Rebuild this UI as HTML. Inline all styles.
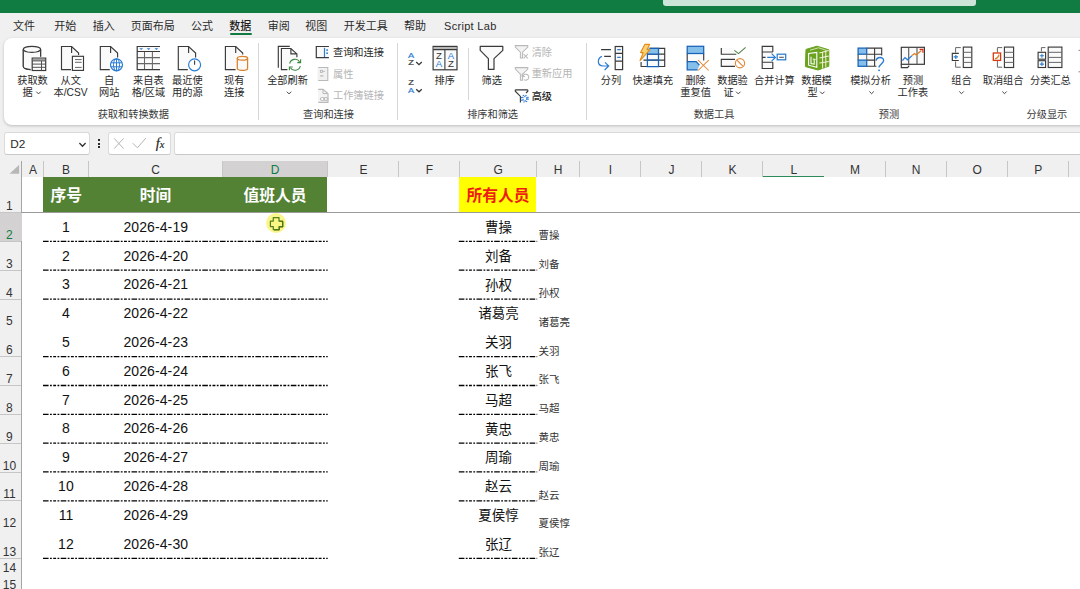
<!DOCTYPE html>
<html lang="zh-CN">
<head>
<meta charset="utf-8">
<title>Excel</title>
<style>
*{margin:0;padding:0;box-sizing:border-box}
html,body{width:1080px;height:589px;overflow:hidden;background:#f0f0f0}
body{position:relative;font-family:"Liberation Sans","Noto Sans CJK SC",sans-serif;color:#2b2b2b}
.abs{position:absolute}
.t{position:absolute;white-space:nowrap;line-height:1;transform:translate(-50%,-50%)}
.tl{position:absolute;white-space:nowrap;line-height:1;transform:translate(0,-50%)}
#wrap{position:absolute;left:-10px;top:-10px;width:1100px;height:609px;background:#f0f0f0;filter:blur(.3px)}
#page{position:absolute;left:10px;top:10px;width:1080px;height:589px}
/* top */
#titlebar{position:absolute;left:-10px;top:-10px;width:1100px;height:22.5px;background:#107c41}
#search{position:absolute;left:663px;top:-4px;width:313px;height:9.7px;background:#cde4d8;border-radius:3px}
.tab{font-size:11px;color:#2a2a2a}
/* ribbon */
#ribbon{position:absolute;left:4px;top:37.5px;width:1090px;height:87.5px;background:#fff;border-radius:8px;box-shadow:0 1px 3px rgba(0,0,0,.22)}
.rl{font-size:10.2px;color:#2a2a2a}
.gl{font-size:10.2px;color:#3a3a3a}
.dis{color:#b4b4b4}
.sep{position:absolute;width:1px;background:#d6d6d6}
/* formula bar */
.fb{position:absolute;background:#fff;border:1px solid #dadada;border-bottom-color:#c8c8c8;border-radius:3px}
/* sheet */
#sheet{position:absolute;left:0;top:161px;width:1090px;height:438px;background:#fff}
#colhdr{position:absolute;left:0;top:161px;width:1090px;height:16px;background:#f0f0f0}
#rowhdr{position:absolute;left:-10px;top:161px;width:32px;height:438px;background:#f0f0f0;border-right:1px solid #a6a6a6}
.ch{font-size:12px;color:#333}
.cd{position:absolute;top:161px;width:1px;height:15.5px;background:#c6c6c6}
.rh{font-size:12px;color:#333}
.rd{position:absolute;left:0;width:21px;height:1px;background:#c6c6c6}
.cell{font-size:14px;color:#111;letter-spacing:.1px}
.nm{font-size:13.5px;color:#111}
.sm{font-size:10.5px;color:#333}
.hd{font-size:15.75px;font-weight:bold;color:#fff}
.dl{position:absolute;height:1px}
</style>
</head>
<body>
<div id="wrap"><div id="page">
<div id="titlebar"></div>
<div id="search"></div>

<!-- tabs -->
<span class="t tab" style="left:24px;top:25.5px">文件</span>
<span class="t tab" style="left:65.2px;top:25.5px">开始</span>
<span class="t tab" style="left:103.7px;top:25.5px">插入</span>
<span class="t tab" style="left:152.7px;top:25.5px">页面布局</span>
<span class="t tab" style="left:202px;top:25.5px">公式</span>
<span class="t tab" style="left:240.2px;top:25.5px;font-weight:500;color:#1d1d1d">数据</span>
<span class="t tab" style="left:278.7px;top:25.5px">审阅</span>
<span class="t tab" style="left:316.3px;top:25.5px">视图</span>
<span class="t tab" style="left:365.7px;top:25.5px">开发工具</span>
<span class="t tab" style="left:415px;top:25.5px">帮助</span>
<span class="t tab" style="left:470.3px;top:25.5px;letter-spacing:.3px">Script Lab</span>
<div class="abs" style="left:229.5px;top:33.4px;width:22px;height:1.7px;background:#107c41;border-radius:1px"></div>

<div id="ribbon"></div>
<svg class="abs" style="left:0;top:0" width="1080" height="130" viewBox="0 0 1080 130"><path d="M23.3 49.3 V66.6 C23.3 68 26.5 69.3 30.6 69.6 M40.6 49.3 V56.8" fill="none" stroke="#3a3a3a" stroke-width="1.15"/>
<path d="M23.3 49.3 V66.6 C23.3 68 26.5 69.3 30.6 69.6 H32 V58 H40.6 V49.3Z" fill="#fafafa"/>
<ellipse cx="31.95" cy="49.3" rx="8.65" ry="3" fill="#fafafa" stroke="#3a3a3a" stroke-width="1.15"/>
<path d="M23.3 49.3 V66.6 C23.3 68 26.5 69.3 30.6 69.6 M40.6 49.3 V56.8" fill="none" stroke="#3a3a3a" stroke-width="1.15"/>
<rect x="32.2" y="58.1" width="13.5" height="12.4" fill="#fff" stroke="#3a3a3a" stroke-width="1.2"/>
<rect x="32.8" y="58.7" width="12.3" height="1.9" fill="#a2a2a2"/>
<path d="M32.2 60.9 H45.7 M32.2 64.1 H45.7 M32.2 67.3 H45.7 M41.5 60.9 V70.5" stroke="#505050" stroke-width="1" fill="none"/>
<path d="M36.3 91.7 L38.5 93.9 L40.7 91.7" fill="none" stroke="#444" stroke-width="1"/>
<path d="M61.5 46.5 H71.6 L78.6 53.1 V69.6 H61.5 Z" fill="#fafafa"/><path d="M71.0 69.6 H61.5 V46.5 H71.6 L78.6 53.1 V55.0" fill="none" stroke="#3a3a3a" stroke-width="1.15"/><path d="M71.6 46.5 V52.9" fill="none" stroke="#3a3a3a" stroke-width="1.15"/>
<rect x="72.4" y="56.3" width="11.1" height="14.1" fill="#fff" stroke="#3a3a3a" stroke-width="1.15"/>
<path d="M75 59.6 H81.7 M75 62.3 H81.7 M75 67.4 H81.7" stroke="#666" stroke-width="1" fill="none"/>
<path d="M100.3 46.5 H110.6 L117.6 53.1 V69.6 H100.3 Z" fill="#fafafa"/><path d="M109.8 69.6 H100.3 V46.5 H110.6 L117.6 53.1 V57.6" fill="none" stroke="#3a3a3a" stroke-width="1.15"/><path d="M110.6 46.5 V52.9" fill="none" stroke="#3a3a3a" stroke-width="1.15"/>
<circle cx="116.5" cy="64.8" r="6" fill="#fff" stroke="#2b7cd3" stroke-width="1.2"/>
<ellipse cx="116.5" cy="64.8" rx="3" ry="6" fill="none" stroke="#2b7cd3" stroke-width="1"/>
<path d="M110.8 62.8 H122.2 M110.8 66.8 H122.2 M116.5 58.8 V70.8" stroke="#2b7cd3" stroke-width="1" fill="none"/>
<rect x="137.2" y="46.5" width="22.8" height="23.1" fill="#fafafa"/>
<path d="M144.5 51.5 V69.6 M152.4 51.5 V69.6 M137.2 57.6 H160 M137.2 63.6 H160" stroke="#666" stroke-width="1.05" fill="none"/>
<path d="M160 46.5 H137.2 V69.6 H160 M137.2 51.5 H160" stroke="#3a3a3a" stroke-width="1.2" fill="none"/>
<path d="M139.3 48.2 H143.1 L141.2 50 Z" fill="#2b7cd3"/>
<path d="M146.7 48.2 H150.5 L148.6 50 Z" fill="#2b7cd3"/>
<path d="M154.5 48.2 H158.3 L156.4 50 Z" fill="#2b7cd3"/>
<path d="M178.3 46.5 H188.6 L195.6 53.1 V69.6 H178.3 Z" fill="#fafafa"/><path d="M187.8 69.6 H178.3 V46.5 H188.6 L195.6 53.1 V57.5" fill="none" stroke="#3a3a3a" stroke-width="1.15"/><path d="M188.6 46.5 V52.9" fill="none" stroke="#3a3a3a" stroke-width="1.15"/>
<circle cx="194.6" cy="64.8" r="6" fill="#fff" stroke="#2b7cd3" stroke-width="1.2"/>
<path d="M194.6 60.6 V64.8" stroke="#3a3a3a" stroke-width="1.1"/>
<path d="M225.4 46.5 H235.7 L242.7 53.1 V69.6 H225.4 Z" fill="#fafafa"/><path d="M235.6 69.6 H225.4 V46.5 H235.7 L242.7 53.1 V54.6" fill="none" stroke="#3a3a3a" stroke-width="1.15"/><path d="M235.7 46.5 V52.9" fill="none" stroke="#3a3a3a" stroke-width="1.15"/>
<path d="M237.3 58.3 V68.6 C237.3 71 247.6 71 247.6 68.6 V58.3" fill="#fafafa" stroke="#d9822b" stroke-width="1.25"/>
<ellipse cx="242.45" cy="58.3" rx="5.15" ry="1.9" fill="#fafafa" stroke="#d9822b" stroke-width="1.25"/>
<path d="M289.8 46.3 H278.3 V67.8" fill="none" stroke="#3a3a3a" stroke-width="1.15"/>
<path d="M281.4 48.5 H290.9 L296.9 53.9 V69.6 H281.4Z" fill="#fafafa"/>
<path d="M287.4 69.6 H281.4 V48.5 H290.9 L296.9 53.9 V57.2 M290.9 48.5 V53.9 H296.9" fill="none" stroke="#3a3a3a" stroke-width="1.15"/>
<circle cx="295" cy="64.8" r="6.3" fill="#fff"/>
<path d="M289.7 63.6 A5.4 5.4 0 0 1 299.6 61.9 M300.3 66 A5.4 5.4 0 0 1 290.4 67.7" fill="none" stroke="#3b873e" stroke-width="1.1"/>
<path d="M300.6 59.3 V62.6 H297.3 M289.4 70.3 V67 H292.7" fill="none" stroke="#3b873e" stroke-width="1.1"/>
<path d="M286.8 91.7 L289.0 93.9 L291.2 91.7" fill="none" stroke="#444" stroke-width="1"/>
<rect x="316.3" y="46.5" width="12.6" height="11.1" fill="#fafafa"/>
<path d="M328.9 46.5 H316.3 V57.6 H328.9" fill="none" stroke="#3a3a3a" stroke-width="1.2"/>
<path d="M324.5 47.8 V57" stroke="#2b7cd3" stroke-width="1.2"/>
<rect x="326.3" y="49.3" width="1.6" height="1.6" fill="#2b7cd3"/><rect x="326.3" y="52.4" width="1.6" height="1.6" fill="#2b7cd3"/>
<rect x="317.6" y="67.5" width="10.2" height="13" fill="#f1f1f1"/>
<path d="M318.2 67.5 H327.8 V80.5 H318.2" fill="none" stroke="#b9b9b9" stroke-width="1.1"/>
<rect x="320.4" y="70.4" width="2" height="2" fill="none" stroke="#b9b9b9" stroke-width=".9"/><path d="M322.4 71.4 H325" stroke="#b9b9b9" stroke-width=".9"/><path d="M320.2 75.9 H323.4" stroke="#b9b9b9" stroke-width="1.3"/>
<path d="M318.2 89.4 H323 L328 93.6 V102.4 H318.2" fill="#f4f4f4" stroke="#b9b9b9" stroke-width="1.1"/>
<path d="M323 89.4 V93.6 H328" fill="none" stroke="#b9b9b9" stroke-width="1"/>
<ellipse cx="322.4" cy="99" rx="2.2" ry="1.5" fill="#fff" stroke="#b9b9b9" stroke-width="1"/><ellipse cx="325.8" cy="99" rx="2.2" ry="1.5" fill="none" stroke="#b9b9b9" stroke-width="1"/>
<path d="M416.2 62.0 L419.0 64.6 L421.8 62.0" fill="none" stroke="#333" stroke-width="1.25"/>
<path d="M416.2 89.2 L419.0 91.8 L421.8 89.2" fill="none" stroke="#333" stroke-width="1.25"/>
<rect x="433.1" y="46.4" width="23.9" height="23.4" fill="#fafafa" stroke="#3a3a3a" stroke-width="1.2"/>
<rect x="433.7" y="47" width="22.7" height="2.4" fill="#b8b8b8"/>
<path d="M433.1 49.6 H457 M444.9 49.6 V69.8" stroke="#3a3a3a" stroke-width="1.1" fill="none"/>
<path d="M480.2 46.4 H502.8 V50.4 L494 58.6 V69.4 H488.4 V58.6 L480.2 50.4 Z" fill="#fafafa" stroke="#3a3a3a" stroke-width="1.2" stroke-linejoin="round"/>
<path d="M515.3 45.6 H527.8 V47 L522.6 52.2 V58 H520.4 V52.2 L515.3 47 Z" fill="#f3f3f3" stroke="#b9b9b9" stroke-width="1.05"/>
<path d="M523.6 54 L527.8 58.4 M527.8 54 L523.6 58.4" stroke="#b9b9b9" stroke-width="1.05"/>
<path d="M515.3 67.6 H527.8 V69 L522.6 74.2 V80.2 H520.4 V74.2 L515.3 69 Z" fill="#f3f3f3" stroke="#b9b9b9" stroke-width="1.05"/>
<path d="M523 76 A3 3 0 1 1 524 79.6 M522.2 73.6 V76.4 H525" fill="none" stroke="#b9b9b9" stroke-width="1.05"/>
<path d="M515.3 89.8 H527.8 M527.8 89.8 V91.2 L526 93 M515.3 89.8 V91.2 L520.4 96.4 V102.6" fill="none" stroke="#3a3a3a" stroke-width="1.15"/>
<circle cx="524.8" cy="98.6" r="2.2" fill="none" stroke="#2b7cd3" stroke-width="1.5" stroke-dasharray="1.2 1"/><circle cx="524.8" cy="98.6" r="3.4" fill="none" stroke="#2b7cd3" stroke-width="1.2" stroke-dasharray="1.3 1.4"/>
<rect x="615.2" y="46.5" width="7.4" height="23.1" fill="#fafafa" stroke="#3a3a3a" stroke-width="1.2"/>
<path d="M615.2 53.4 H622.6 M615.2 61.2 H622.6" stroke="#3a3a3a" stroke-width="1.2"/>
<path d="M617.2 49.6 H620.8 M617.2 57.4 H620.8" stroke="#2b7cd3" stroke-width="1.2"/>
<path d="M601.1 49.6 H610.9 M604.2 56.3 H610.9" stroke="#3a3a3a" stroke-width="1.15"/>
<path d="M601.9 56.4 C597 58.5 597 65.8 603 66 H608.4 M605 62.4 L608.7 66 L604.6 70" fill="none" stroke="#2b7cd3" stroke-width="1.2"/>
<rect x="641.1" y="48.3" width="23.6" height="18.2" fill="#fafafa"/>
<path d="M649 48.3 H664.7 V66.5 H641.1 V62 M647.4 54.1 H664.7 M643.5 60.1 H664.7" fill="none" stroke="#3a3a3a" stroke-width="1.15"/>
<rect x="647.4" y="48.3" width="11.1" height="5.8" fill="#86bfea"/>
<path d="M647.4 52 V66.5 H658.5 V48.3 H650 M647.4 54.1 H658.5 M647.4 60.1 H658.5" fill="none" stroke="#1763b8" stroke-width="1.25"/>
<path d="M644.8 44.4 H649.6 L647 49.8 H649.8 L640 60.6 L643.2 52.6 H640.6 Z" fill="#f8d374" stroke="#e38a17" stroke-width="1.1" stroke-linejoin="round"/>
<rect x="687.2" y="53.5" width="16.5" height="8" fill="#fafafa"/>
<path d="M687.2 53.5 V61.5 M703.7 53.5 V60.5" stroke="#3a3a3a" stroke-width="1.15"/>
<rect x="687.2" y="46.3" width="16.5" height="7.2" fill="#86bfea" stroke="#1763b8" stroke-width="1.25"/>
<path d="M697.6 69.8 H687.2 V61.5 H696.2 L699.4 65.2" fill="#86bfea" stroke="#1763b8" stroke-width="1.25"/>
<path d="M698.1 60.1 L708.7 70.5 M708.7 60.1 L698.1 70.5" stroke="#e08a3a" stroke-width="1.05"/>
<rect x="721.3" y="48" width="14" height="6.2" fill="#fafafa"/><rect x="721.3" y="59.4" width="14" height="6.9" fill="#fafafa"/>
<path d="M721.3 48 V54.2 H736.3" fill="none" stroke="#3a3a3a" stroke-width="1.15"/>
<path d="M734.4 50.4 L738.5 53.6 L745.6 47.3" fill="none" stroke="#4f8140" stroke-width="1.05"/>
<path d="M735 59.4 H721.3 V66.3 H735" fill="none" stroke="#3a3a3a" stroke-width="1.15"/>
<circle cx="740" cy="63.2" r="4.6" fill="#fff" stroke="#e08a3a" stroke-width="1.15"/><path d="M736.9 60.1 L743.1 66.3" stroke="#e08a3a" stroke-width="1.15"/>
<path d="M736.1 91.7 L738.3 93.9 L740.5 91.7" fill="none" stroke="#444" stroke-width="1"/>
<rect x="762.2" y="46.3" width="10.6" height="22.2" fill="#fafafa"/>
<path d="M772.8 52 V46.3 H762.2 V68.5 H772.8 V62.2 M762.2 52 H772.8 M762.2 62.2 H772.8 M762.2 57.4 H765.6" fill="none" stroke="#3a3a3a" stroke-width="1.15"/>
<path d="M767.2 57.4 H775.2 M771.6 53.6 L775.4 57.4 L771.6 61.2" fill="none" stroke="#2b7cd3" stroke-width="1.2"/>
<rect x="777.2" y="54.2" width="8.5" height="5.6" fill="#fff" stroke="#2b7cd3" stroke-width="1.25"/><path d="M779.2 57.3 H783.8" stroke="#555" stroke-width="1.1"/>
<path d="M806 49.4 L817 46.2 L828.8 49.8 V66.2 L818 70 L805.4 66.6 Z" fill="#6ba220" stroke="#6ba220" stroke-width="1" stroke-linejoin="round"/>
<path d="M810 50.2 L818.6 47.8 L826.6 50.4" fill="none" stroke="#d9e8b8" stroke-width=".9"/>
<path d="M819.4 53 L828.8 50.6 M819.4 58 L828.8 56 M819.4 63 L828.8 61.4 M822.6 51.4 V68.4 M825.8 50.6 V67.4" stroke="#f3f0d8" stroke-width="1.05"/>
<path d="M808.6 53.4 V65.2 L816.8 67.4 V52.4 Z" fill="none" stroke="#fff" stroke-width="1.1"/>
<path d="M811 56.8 V63.6 L814.2 64.2 V60 M812.8 59 L815.6 59.4" fill="none" stroke="#fff" stroke-width="1.05"/>
<path d="M820.1 91.7 L822.3 93.9 L824.5 91.7" fill="none" stroke="#444" stroke-width="1"/>
<rect x="858.1" y="48.1" width="23.6" height="18.2" fill="#fafafa"/>
<path d="M866.7 48.1 H881.7 V55.6 M866.7 66.3 H876.4 M866.7 54.2 H881.7 M866.7 60.1 H875.4 M874.6 48.1 V66.3 M858.1 54.2 V60.1" fill="none" stroke="#3a3a3a" stroke-width="1.1"/>
<rect x="858.1" y="48.1" width="8.6" height="6.1" fill="#86bfea" stroke="#1763b8" stroke-width="1.25"/><rect x="858.1" y="60.1" width="8.6" height="6.2" fill="#86bfea" stroke="#1763b8" stroke-width="1.25"/>
<path d="M866.7 54.2 V60.1" stroke="#666" stroke-width="1"/>
<path d="M876.2 60.6 C876.6 56.4 883.8 56.4 883.6 60.6 C883.4 63.6 879 64.4 879 67.6" fill="none" stroke="#2b7cd3" stroke-width="1.35"/><rect x="878.2" y="69.6" width="1.7" height="1.5" fill="#2b7cd3"/>
<path d="M869.4 91.5 L871.6 93.7 L873.8 91.5" fill="none" stroke="#444" stroke-width="1"/>
<rect x="901.3" y="47.3" width="23.1" height="17" fill="#fafafa" stroke="#3a3a3a" stroke-width="1.2"/>
<path d="M908.7 47.3 V64.3 M917 47.3 V64.3" stroke="#555" stroke-width="1.1"/>
<path d="M901.3 64.3 V67.6 H907.6 L909.2 65.6" fill="none" stroke="#3a3a3a" stroke-width="1.15"/>
<path d="M902.4 60.6 L905 57.6 L907.6 59.8 L912 55.6" fill="none" stroke="#2b7cd3" stroke-width="1.3"/>
<path d="M912 55.6 L914.6 53.6 L916.2 55 L921.4 50.4" fill="none" stroke="#d9822b" stroke-width="1.3"/>
<path d="M919.6 49.4 H922.9 V52.7" fill="none" stroke="#e02a10" stroke-width="1.15"/>
<rect x="963.3" y="47.1" width="8.5" height="20.4" fill="#fafafa" stroke="#3a3a3a" stroke-width="1.15"/><path d="M963.3 52.3 H971.8 M963.3 57.4 H971.8 M963.3 62.4 H971.8" stroke="#666" stroke-width="1"/>
<path d="M960.8 47.6 H955.6 V52.6 M955.6 61.4 V67.2 H960.8" fill="none" stroke="#666" stroke-width="1"/>
<path d="M958.8 53.4 H952.3 V60.5 H958.8" fill="#fff" stroke="#3a3a3a" stroke-width="1.15"/>
<path d="M953.7 56.95 H958 M955.8 54.9 V59" stroke="#2b7cd3" stroke-width="1.2"/>
<path d="M959.3 91.5 L961.5 93.7 L963.7 91.5" fill="none" stroke="#444" stroke-width="1"/>
<rect x="1004.4" y="47.1" width="9.2" height="20.4" fill="#fafafa" stroke="#3a3a3a" stroke-width="1.15"/><path d="M1004.4 52.3 H1013.6 M1004.4 57.4 H1013.6 M1004.4 62.4 H1013.6" stroke="#666" stroke-width="1"/>
<path d="M1002.2 47.6 H997.4 V52.6 M997.4 61 V67.2 H1002.2" fill="none" stroke="#666" stroke-width="1"/>
<rect x="993.3" y="53" width="7.3" height="7.4" fill="#fff" stroke="#d63a12" stroke-width="1.3"/>
<path d="M995 58.8 C997 58.4 998.6 56.6 999 54.6" fill="none" stroke="#d9822b" stroke-width="1.3"/>
<path d="M1002.3 91.5 L1004.5 93.7 L1006.7 91.5" fill="none" stroke="#444" stroke-width="1"/>
<rect x="1048.2" y="47.1" width="13.7" height="20.4" fill="#fafafa" stroke="#3a3a3a" stroke-width="1.15"/><path d="M1048.2 52.3 H1061.9 M1048.2 57.4 H1061.9 M1048.2 62.4 H1061.9" stroke="#666" stroke-width="1"/>
<path d="M1045.4 47.6 H1041.4 V51.4" fill="none" stroke="#666" stroke-width="1"/>
<rect x="1038.1" y="52.3" width="7.5" height="6.9" fill="#fff" stroke="#3a3a3a" stroke-width="1.15"/><rect x="1038.1" y="60.7" width="7.5" height="6.8" fill="#fff" stroke="#3a3a3a" stroke-width="1.15"/>
<path d="M1039.8 55.75 H1044 M1041.9 53.8 V57.8 M1039.8 64.1 H1044 M1041.9 62.1 V66.1" stroke="#2b7cd3" stroke-width="1.05"/>
<path d="M1078.5 50.4 H1080 M1078.5 71.8 H1080" stroke="#888" stroke-width="1"/></svg>
<span class="t rl" style="left:32.5px;top:80.6px;">获取数</span>
<span class="t rl" style="left:27.6px;top:93.0px;">据</span>
<span class="t rl" style="left:70.7px;top:80.6px;">从文</span>
<span class="t rl" style="left:70.5px;top:93.0px;">本/CSV</span>
<span class="t rl" style="left:109.2px;top:80.6px;">自</span>
<span class="t rl" style="left:109.2px;top:93.0px;">网站</span>
<span class="t rl" style="left:148.4px;top:80.6px;">来自表</span>
<span class="t rl" style="left:148.4px;top:93.0px;">格/区域</span>
<span class="t rl" style="left:187.3px;top:80.6px;">最近使</span>
<span class="t rl" style="left:187.3px;top:93.0px;">用的源</span>
<span class="t rl" style="left:234.2px;top:80.6px;">现有</span>
<span class="t rl" style="left:234.2px;top:93.0px;">连接</span>
<span class="t gl" style="left:133.3px;top:115.4px;">获取和转换数据</span>
<div class="sep" style="left:258px;top:42.5px;height:77.5px"></div>
<span class="t rl" style="left:287.5px;top:81.2px;">全部刷新</span>
<span class="tl rl" style="left:333px;top:52.9px;">查询和连接</span>
<span class="tl rl dis" style="left:333px;top:74.6px;">属性</span>
<span class="tl rl dis" style="left:333px;top:96.4px;">工作簿链接</span>
<span class="t gl" style="left:328.5px;top:115.4px;">查询和连接</span>
<div class="sep" style="left:397px;top:42.5px;height:77.5px"></div>
<span class="t rl" style="left:411.2px;top:56px;font-family:'Liberation Sans',sans-serif;font-size:7.4px;transform:translate(-50%,-50%) scale(1.25,1);-webkit-text-stroke:.2px;color:#2b7cd3">A</span>
<span class="t rl" style="left:411.2px;top:63.1px;font-family:'Liberation Sans',sans-serif;font-size:7.4px;transform:translate(-50%,-50%) scale(1.25,1);-webkit-text-stroke:.2px;color:#333">Z</span>
<span class="t rl" style="left:411.2px;top:82.7px;font-family:'Liberation Sans',sans-serif;font-size:7.4px;transform:translate(-50%,-50%) scale(1.25,1);-webkit-text-stroke:.2px;color:#333">Z</span>
<span class="t rl" style="left:411.2px;top:90.9px;font-family:'Liberation Sans',sans-serif;font-size:7.4px;transform:translate(-50%,-50%) scale(1.25,1);-webkit-text-stroke:.2px;color:#2b7cd3">A</span>
<span class="t rl" style="left:439.2px;top:55.5px;font-family:'Liberation Sans',sans-serif;font-size:8.8px;transform:translate(-50%,-50%) scale(1.1,1);color:#333">Z</span>
<span class="t rl" style="left:439.2px;top:63.8px;font-family:'Liberation Sans',sans-serif;font-size:8.8px;transform:translate(-50%,-50%) scale(1.1,1);color:#2b7cd3">A</span>
<span class="t rl" style="left:450.8px;top:55.5px;font-family:'Liberation Sans',sans-serif;font-size:8.8px;transform:translate(-50%,-50%) scale(1.1,1);color:#2b7cd3">A</span>
<span class="t rl" style="left:450.8px;top:63.8px;font-family:'Liberation Sans',sans-serif;font-size:8.8px;transform:translate(-50%,-50%) scale(1.1,1);color:#333">Z</span>
<span class="t rl" style="left:444.7px;top:80.6px;">排序</span>
<div class="sep" style="left:468.3px;top:47.5px;height:52px"></div>
<span class="t rl" style="left:491.7px;top:80.6px;">筛选</span>
<span class="tl rl dis" style="left:531.7px;top:52.8px;">清除</span>
<span class="tl rl dis" style="left:531.7px;top:74.4px;">重新应用</span>
<span class="tl rl" style="left:531.7px;top:96.5px;color:#1f1f1f;font-weight:500">高级</span>
<span class="t gl" style="left:492.6px;top:115.4px;">排序和筛选</span>
<div class="sep" style="left:586.3px;top:42.5px;height:77.5px"></div>
<span class="t rl" style="left:611px;top:80.6px;">分列</span>
<span class="t rl" style="left:652.8px;top:80.6px;">快速填充</span>
<span class="t rl" style="left:695.6px;top:80.6px;">删除</span>
<span class="t rl" style="left:695.6px;top:93.0px;">重复值</span>
<span class="t rl" style="left:732.5px;top:80.6px;">数据验</span>
<span class="t rl" style="left:728.5px;top:93.0px;">证</span>
<span class="t rl" style="left:774.4px;top:80.6px;">合并计算</span>
<span class="t rl" style="left:816.5px;top:80.6px;">数据模</span>
<span class="t rl" style="left:812.5px;top:93.0px;">型</span>
<span class="t gl" style="left:714px;top:115.4px;">数据工具</span>
<span class="t rl" style="left:870.5px;top:80.6px;">模拟分析</span>
<span class="t rl" style="left:912.9px;top:80.6px;">预测</span>
<span class="t rl" style="left:912.9px;top:93.0px;">工作表</span>
<span class="t gl" style="left:889px;top:115.4px;">预测</span>
<span class="t rl" style="left:961.5px;top:80.6px;">组合</span>
<span class="t rl" style="left:1003.1px;top:80.6px;">取消组合</span>
<span class="t rl" style="left:1050.4px;top:80.6px;">分类汇总</span>
<span class="t gl" style="left:1046.9px;top:115.4px;">分级显示</span>

<!-- formula bar -->
<div class="fb" style="left:4.2px;top:131.8px;width:86.2px;height:22.8px"></div>
<span class="tl" style="left:10.3px;top:144.8px;font-size:11.8px;color:#2a2a2a">D2</span>
<svg class="abs" style="left:77px;top:140px" width="11" height="9" viewBox="0 0 11 9"><path d="M2.4 3 L5.5 6.3 L8.6 3" fill="none" stroke="#333" stroke-width="1.25"/></svg>
<div class="abs" style="left:98px;top:139.2px;width:2px;height:2px;background:#2a2a2a"></div>
<div class="abs" style="left:98px;top:142.5px;width:2px;height:2px;background:#2a2a2a"></div>
<div class="abs" style="left:98px;top:145.8px;width:2px;height:2px;background:#2a2a2a"></div>
<div class="fb" style="left:108px;top:131.8px;width:62.9px;height:22.8px"></div>
<svg class="abs" style="left:113px;top:137px" width="12" height="13" viewBox="0 0 12 13"><path d="M1.2 1.4 L10.6 11.6 M10.6 1.4 L1.2 11.6" fill="none" stroke="#b4b4b4" stroke-width="1"/></svg>
<svg class="abs" style="left:132px;top:137px" width="15" height="12" viewBox="0 0 15 12"><path d="M0.8 6.2 L5.4 10.8 L13.8 1.2" fill="none" stroke="#b4b4b4" stroke-width="1"/></svg>
<span class="t" style="left:160px;top:143.4px;font-family:'Liberation Serif',serif;font-style:italic;font-weight:normal;font-size:14.5px;color:#222;letter-spacing:-.2px;-webkit-text-stroke:.15px #222">f<span style="font-size:10.5px">x</span></span>
<div class="fb" style="left:173.8px;top:131.8px;width:920px;height:22.8px"></div>

<!-- sheet -->
<div id="sheet"></div>
<div id="colhdr"></div>
<div id="rowhdr"></div>
<div class="abs" style="left:222.1px;top:161px;width:105.6px;height:16px;background:#d3d1d1"></div>
<span class="t ch" style="left:32.9px;top:170.1px;color:#333">A</span>
<div class="cd" style="left:42.8px"></div>
<span class="t ch" style="left:66.1px;top:170.1px;color:#333">B</span>
<div class="cd" style="left:87.9px"></div>
<span class="t ch" style="left:155.6px;top:170.1px;color:#333">C</span>
<div class="cd" style="left:221.6px"></div>
<span class="t ch" style="left:275.2px;top:170.1px;color:#107c41">D</span>
<div class="cd" style="left:327.2px"></div>
<span class="t ch" style="left:363.5px;top:170.1px;color:#333">E</span>
<div class="cd" style="left:398.2px"></div>
<span class="t ch" style="left:429.3px;top:170.1px;color:#333">F</span>
<div class="cd" style="left:458.8px"></div>
<span class="t ch" style="left:498.1px;top:170.1px;color:#333">G</span>
<div class="cd" style="left:535.8px"></div>
<span class="t ch" style="left:558.2px;top:170.1px;color:#333">H</span>
<div class="cd" style="left:579.0px"></div>
<span class="t ch" style="left:610.3px;top:170.1px;color:#333">I</span>
<div class="cd" style="left:640.1px"></div>
<span class="t ch" style="left:671.5px;top:170.1px;color:#333">J</span>
<div class="cd" style="left:701.3px"></div>
<span class="t ch" style="left:732.6px;top:170.1px;color:#333">K</span>
<div class="cd" style="left:762.4px"></div>
<span class="t ch" style="left:793.8px;top:170.1px;color:#333">L</span>
<span class="t ch" style="left:854.9px;top:170.1px;color:#333">M</span>
<div class="cd" style="left:884.7px"></div>
<span class="t ch" style="left:916.0px;top:170.1px;color:#333">N</span>
<div class="cd" style="left:945.8px"></div>
<span class="t ch" style="left:977.2px;top:170.1px;color:#333">O</span>
<div class="cd" style="left:1007.0px"></div>
<span class="t ch" style="left:1038.3px;top:170.1px;color:#333">P</span>
<div class="cd" style="left:1068.1px"></div>
<span class="t ch" style="left:1099.6px;top:170.1px;color:#333">Q</span>
<div class="cd" style="left:1129.5px"></div>
<svg class="abs" style="left:8px;top:163px" width="13" height="13" viewBox="0 0 13 13"><path d="M11.2 1.8 L11.2 10.8 L1.6 10.8 Z" fill="#b7b7b7"/></svg>
<div class="abs" style="left:762.5px;top:175.8px;width:61.5px;height:1.3px;background:#2e8b57"></div>
<div class="abs" style="left:0;top:212.6px;width:21.5px;height:28.8px;background:#d3d1d1"></div>
<span class="t rh" style="left:9.4px;top:206.1px;color:#333">1</span>
<div class="rd" style="top:212.1px"></div>
<span class="t rh" style="left:9.4px;top:234.9px;color:#107c41">2</span>
<div class="rd" style="top:240.9px"></div>
<span class="t rh" style="left:9.4px;top:263.7px;color:#333">3</span>
<div class="rd" style="top:269.7px"></div>
<span class="t rh" style="left:9.4px;top:292.5px;color:#333">4</span>
<div class="rd" style="top:298.5px"></div>
<span class="t rh" style="left:9.4px;top:321.4px;color:#333">5</span>
<span class="t rh" style="left:9.4px;top:350.2px;color:#333">6</span>
<div class="rd" style="top:356.2px"></div>
<span class="t rh" style="left:9.4px;top:379.0px;color:#333">7</span>
<div class="rd" style="top:385.0px"></div>
<span class="t rh" style="left:9.4px;top:407.8px;color:#333">8</span>
<div class="rd" style="top:413.8px"></div>
<span class="t rh" style="left:9.4px;top:436.6px;color:#333">9</span>
<div class="rd" style="top:442.6px"></div>
<span class="t rh" style="left:9.4px;top:465.5px;color:#333">10</span>
<div class="rd" style="top:471.5px"></div>
<span class="t rh" style="left:9.4px;top:494.3px;color:#333">11</span>
<div class="rd" style="top:500.3px"></div>
<span class="t rh" style="left:9.4px;top:523.1px;color:#333">12</span>
<span class="t rh" style="left:9.4px;top:551.9px;color:#333">13</span>
<div class="rd" style="top:557.9px"></div>
<span class="t rh" style="left:9.4px;top:568.0px;color:#333">14</span>
<span class="t rh" style="left:9.4px;top:584.9px;color:#333">15</span>
<div class="abs" style="left:43.3px;top:177px;width:283.7px;height:35.3px;background:#548235"></div>
<div class="abs" style="left:459.3px;top:177px;width:77px;height:34.8px;background:#ffff00"></div>
<span class="t hd" style="left:66.3px;top:196px">序号</span>
<span class="t hd" style="left:155.5px;top:196px">时间</span>
<span class="t hd" style="left:275px;top:196px">值班人员</span>
<span class="t hd" style="left:498px;top:196px;color:#ee1c12">所有人员</span>
<div class="abs" style="left:22px;top:212px;width:1058px;height:1.2px;background:#9b9b9b"></div>
<span class="t cell" style="left:66px;top:226.7px">1</span>
<span class="t cell" style="left:155.8px;top:226.7px">2026-4-19</span>
<span class="t nm" style="left:498.6px;top:227.9px">曹操</span>
<span class="tl sm" style="left:538.5px;top:235.2px">曹操</span>
<span class="t cell" style="left:66px;top:255.5px">2</span>
<span class="t cell" style="left:155.8px;top:255.5px">2026-4-20</span>
<span class="t nm" style="left:498.6px;top:256.7px">刘备</span>
<span class="tl sm" style="left:538.5px;top:264.0px">刘备</span>
<span class="t cell" style="left:66px;top:284.3px">3</span>
<span class="t cell" style="left:155.8px;top:284.3px">2026-4-21</span>
<span class="t nm" style="left:498.6px;top:285.5px">孙权</span>
<span class="tl sm" style="left:538.5px;top:292.8px">孙权</span>
<span class="t cell" style="left:66px;top:313.2px">4</span>
<span class="t cell" style="left:155.8px;top:313.2px">2026-4-22</span>
<span class="t nm" style="left:498.6px;top:314.4px">诸葛亮</span>
<span class="tl sm" style="left:538.5px;top:321.7px">诸葛亮</span>
<span class="t cell" style="left:66px;top:342.0px">5</span>
<span class="t cell" style="left:155.8px;top:342.0px">2026-4-23</span>
<span class="t nm" style="left:498.6px;top:343.2px">关羽</span>
<span class="tl sm" style="left:538.5px;top:350.5px">关羽</span>
<span class="t cell" style="left:66px;top:370.8px">6</span>
<span class="t cell" style="left:155.8px;top:370.8px">2026-4-24</span>
<span class="t nm" style="left:498.6px;top:372.0px">张飞</span>
<span class="tl sm" style="left:538.5px;top:379.3px">张飞</span>
<span class="t cell" style="left:66px;top:399.6px">7</span>
<span class="t cell" style="left:155.8px;top:399.6px">2026-4-25</span>
<span class="t nm" style="left:498.6px;top:400.8px">马超</span>
<span class="tl sm" style="left:538.5px;top:408.1px">马超</span>
<span class="t cell" style="left:66px;top:428.4px">8</span>
<span class="t cell" style="left:155.8px;top:428.4px">2026-4-26</span>
<span class="t nm" style="left:498.6px;top:429.6px">黄忠</span>
<span class="tl sm" style="left:538.5px;top:436.9px">黄忠</span>
<span class="t cell" style="left:66px;top:457.2px">9</span>
<span class="t cell" style="left:155.8px;top:457.2px">2026-4-27</span>
<span class="t nm" style="left:498.6px;top:458.4px">周瑜</span>
<span class="tl sm" style="left:538.5px;top:465.8px">周瑜</span>
<span class="t cell" style="left:66px;top:486.1px">10</span>
<span class="t cell" style="left:155.8px;top:486.1px">2026-4-28</span>
<span class="t nm" style="left:498.6px;top:487.3px">赵云</span>
<span class="tl sm" style="left:538.5px;top:494.6px">赵云</span>
<span class="t cell" style="left:66px;top:514.9px">11</span>
<span class="t cell" style="left:155.8px;top:514.9px">2026-4-29</span>
<span class="t nm" style="left:498.6px;top:516.1px">夏侯惇</span>
<span class="tl sm" style="left:538.5px;top:523.4px">夏侯惇</span>
<span class="t cell" style="left:66px;top:543.7px">12</span>
<span class="t cell" style="left:155.8px;top:543.7px">2026-4-30</span>
<span class="t nm" style="left:498.6px;top:544.9px">张辽</span>
<span class="tl sm" style="left:538.5px;top:552.2px">张辽</span>
<svg class="abs" style="left:0;top:0" width="1080" height="589" viewBox="0 0 1080 589"><g fill="none" stroke="#000" stroke-width="1.3" stroke-dasharray="5.6 1.4 1.8 1.4 2.9 1.4 1.8 1.4"><path d="M43 241.40 H327.7 M458.8 241.40 H537.2"/><path d="M43 270.22 H327.7 M458.8 270.22 H537.2"/><path d="M43 299.04 H327.7 M458.8 299.04 H537.2"/><path d="M43 356.68 H327.7 M458.8 356.68 H537.2"/><path d="M43 385.50 H327.7 M458.8 385.50 H537.2"/><path d="M43 414.32 H327.7 M458.8 414.32 H537.2"/><path d="M43 443.14 H327.7 M458.8 443.14 H537.2"/><path d="M43 471.96 H327.7 M458.8 471.96 H537.2"/><path d="M43 500.78 H327.7 M458.8 500.78 H537.2"/><path d="M43 558.42 H327.7 M458.8 558.42 H537.2"/></g></svg>
<div class="abs" style="left:265.9px;top:212.8px;width:20.3px;height:20.3px;border-radius:50%;background:#fbf68b"></div>
<svg class="abs" style="left:268px;top:215px" width="17" height="17" viewBox="268 215 17 17"><path d="M273.3 217.5 H279 V221 H282.6 V226.6 H279 V229.6 H273.3 V226.6 H270.4 V221 H273.3 Z" fill="#fbf583" stroke="#55801f" stroke-width="1.25" stroke-linejoin="round"/><path d="M279.4 221.4 H282.9 V227 H279.4 V230 H274" fill="none" stroke="#4d7516" stroke-width="1" stroke-linejoin="round"/></svg>
</div></div>
</body>
</html>
